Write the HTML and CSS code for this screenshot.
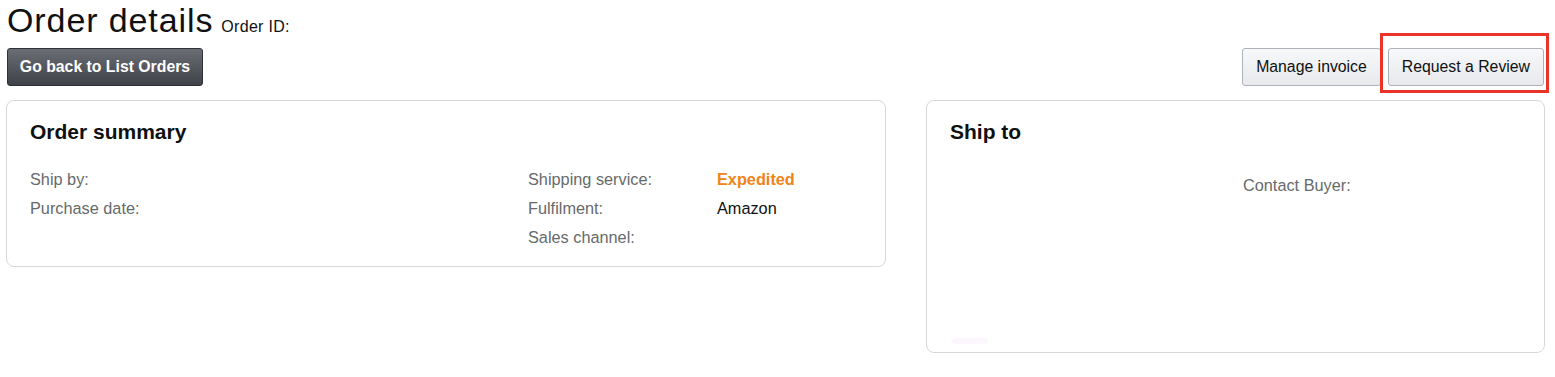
FILE: index.html
```html
<!DOCTYPE html>
<html lang="en">
<head>
<meta charset="utf-8">
<title>Order details</title>
<link rel="stylesheet" href="styles.css">
</head>
<body>
<div class="page">
  <div class="title-row">
    <h1 class="title">Order details</h1>
    <span class="order-id">Order ID:</span>
  </div>
  <div class="action-row">
    <button class="btn btn-dark">Go back to List Orders</button>
    <div class="btn-group">
      <button class="btn btn-light">Manage invoice</button>
      <div class="highlight-wrap">
        <button class="btn btn-light">Request a Review</button>
        <span class="highlight"></span>
      </div>
    </div>
  </div>
  <div class="cards">
    <section class="card summary">
      <h2 class="card-title">Order summary</h2>
      <div class="summary-grid">
        <div class="col">
          <div class="row"><span class="label">Ship by:</span></div>
          <div class="row"><span class="label">Purchase date:</span></div>
        </div>
        <div class="col">
          <div class="row"><span class="label pair">Shipping service:</span><span class="value orange">Expedited</span></div>
          <div class="row"><span class="label pair">Fulfilment:</span><span class="value">Amazon</span></div>
          <div class="row"><span class="label pair">Sales channel:</span></div>
        </div>
      </div>
    </section>
    <section class="card shipto">
      <h2 class="card-title">Ship to</h2>
      <div class="ship-grid">
        <div class="col"></div>
        <div class="col"><span class="label">Contact Buyer:</span></div>
      </div>
      <span class="faint"></span>
    </section>
  </div>
</div>
</body>
</html>
```

FILE: styles.css
```css
* { box-sizing: border-box; }
html, body { margin: 0; padding: 0; background: #ffffff; }
body {
  font-family: "Liberation Sans", Arial, sans-serif;
  color: #0f1111;
}
.page { padding: 0 10px 0 6px; }

.title-row {
  display: flex;
  align-items: baseline;
  height: 40px;
}
.title {
  margin: 0 0 0 1px;
  font-size: 34px;
  font-weight: 400;
  line-height: 40px;
  letter-spacing: 0.9px;
}
.order-id {
  margin-left: 8px;
  font-size: 16px;
  letter-spacing: 0.3px;
}

.action-row {
  display: flex;
  justify-content: space-between;
  align-items: center;
  margin-top: 8px;
  padding-left: 1px;
}
.btn {
  height: 38px;
  border-radius: 3px;
  font-family: "Liberation Sans", Arial, sans-serif;
  font-size: 15.8px;
  cursor: pointer;
  white-space: nowrap;
}
.btn-dark {
  width: 196px;
  padding: 0;
  font-weight: 700;
  color: #ffffff;
  background: linear-gradient(#6b6d75, #40424a);
  border: 1px solid #2f3137;
}
.btn-light {
  padding: 0 13px;
  color: #0f1111;
  background: linear-gradient(#f7f8fa, #e7e9ec);
  border: 1px solid #adb1b8;
}
.btn-group {
  display: flex;
  gap: 7px;
  margin-right: 1px;
}
.highlight-wrap { position: relative; }
.highlight {
  position: absolute;
  left: -8px;
  top: -15px;
  right: -5px;
  bottom: -7px;
  border: 3px solid #ea3429;
  pointer-events: none;
}

.cards {
  display: grid;
  grid-template-columns: 880px 1fr;
  gap: 40px;
  align-items: start;
  margin-top: 14px;
}
.card {
  border: 1px solid #d5d9d9;
  border-radius: 8px;
  background: #ffffff;
  padding: 17px 22px 14px 23px;
}
.card-title {
  margin: 0;
  font-size: 21px;
  font-weight: 700;
  line-height: 28px;
}
.summary-grid {
  display: grid;
  grid-template-columns: 498px 1fr;
  margin-top: 19px;
}
.row {
  display: flex;
  height: 29px;
  line-height: 29px;
  font-size: 16.3px;
}
.label { color: #666a6b; font-size: 16.3px; }
.label.pair { width: 189px; }
.value { color: #0f1111; }
.value.orange { color: #ef8419; font-weight: 700; }

.shipto {
  display: flex;
  flex-direction: column;
  min-height: 253px;
  padding-bottom: 8px;
}
.ship-grid {
  display: grid;
  grid-template-columns: 293px 1fr;
  margin-top: 25px;
  line-height: 29px;
}
.faint {
  margin-top: auto;
  margin-left: 2px;
  width: 36px;
  height: 6px;
  border-radius: 3px;
  background: #fbf7fc;
}
```
